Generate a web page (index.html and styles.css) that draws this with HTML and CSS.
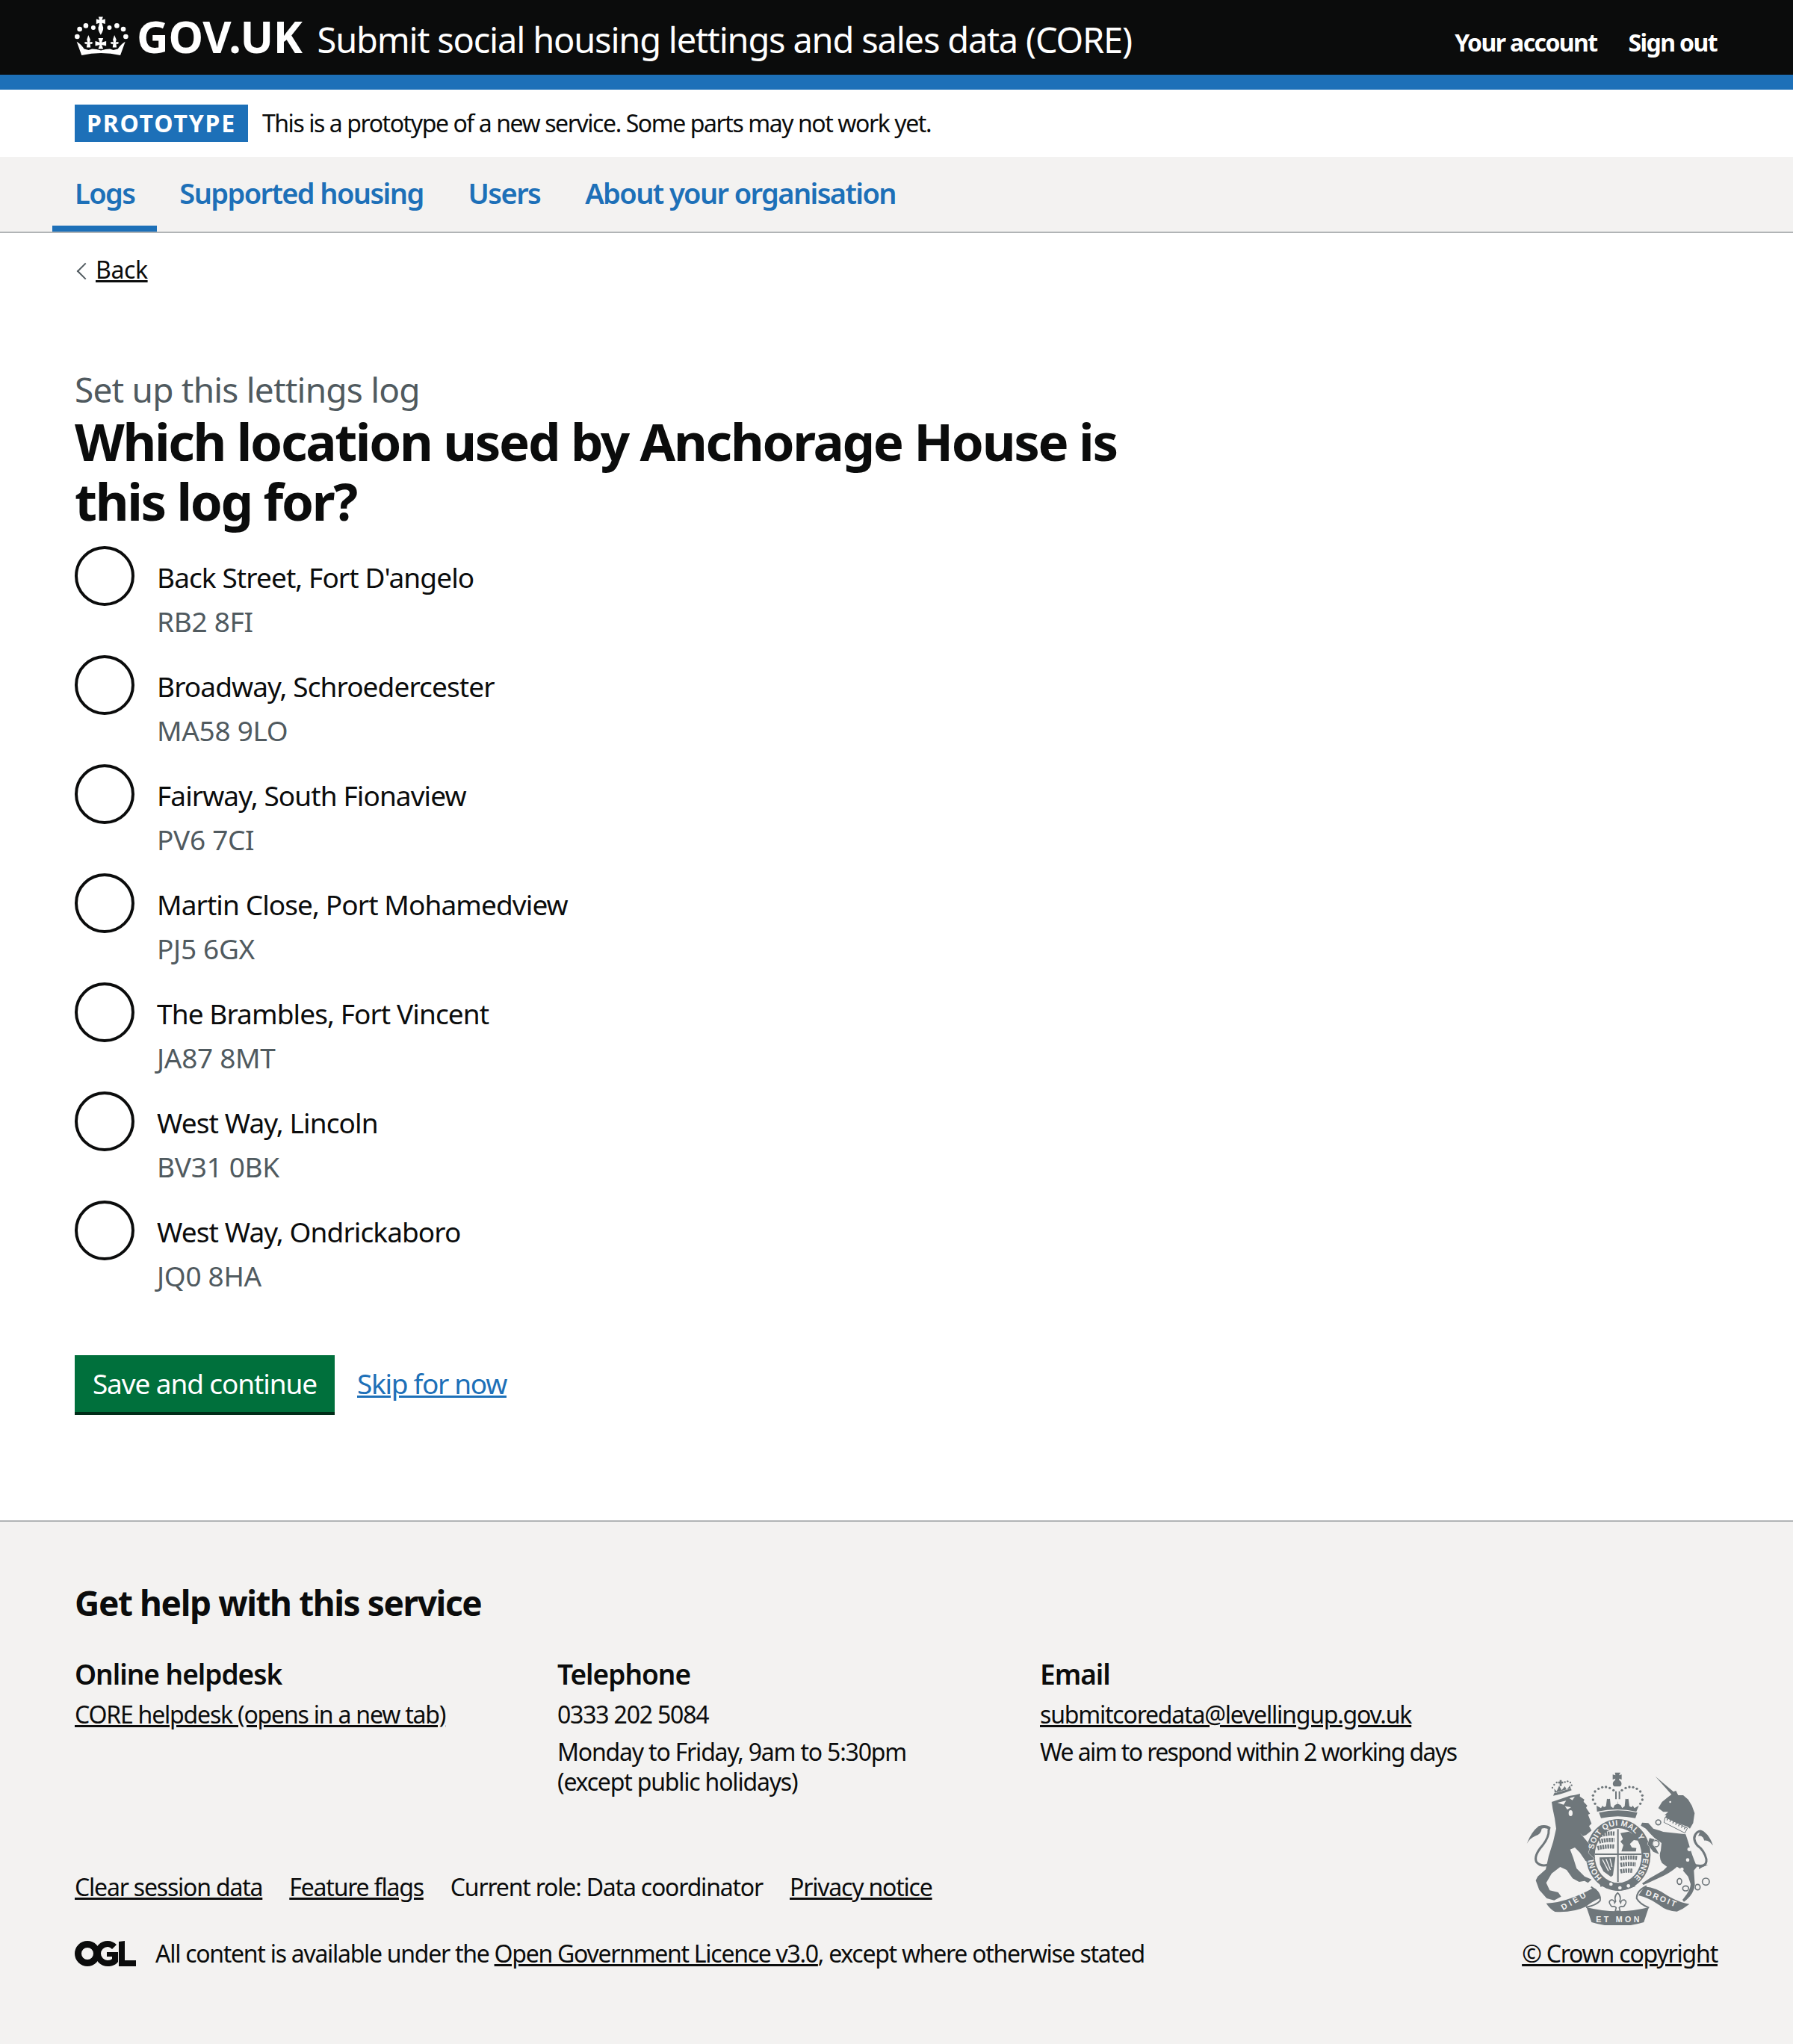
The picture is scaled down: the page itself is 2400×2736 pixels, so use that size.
FILE: index.html
```html
<!DOCTYPE html>
<html lang="en">
<head>
    <meta charset="UTF-8">
    <title>Submit social housing lettings and sales data (CORE)</title>
    <link rel="stylesheet" href="styles.css">
</head>
<body>
    <header class="header">
        <div class="header-inner">
            <a class="logo" href="#">
                <svg class="crown" viewBox="30 15 220 165" aria-hidden="true">
                    <g fill="#fff">
                        <path d="M126 22h18l-4 13 13-4v20l-13-4 3 12q7 12-8 36-15-24-8-36l3-12-13 4V31l13 4z"/>
                        <circle cx="105" cy="66" r="9"/><circle cx="75" cy="58" r="10"/><circle cx="50" cy="72" r="10"/><circle cx="40" cy="102" r="10"/>
                        <circle cx="170" cy="66" r="9"/><circle cx="200" cy="58" r="10"/><circle cx="226" cy="72" r="10"/><circle cx="236" cy="102" r="10"/>
                        <path d="M85 96l8 18-3 12q8-6 14 2l-8 5-4-3 2 16H78l2-16-4 3-8-5q6-8 14-2l-3-12z"/>
                        <path d="M190 96l8 18-3 12q8-6 14 2l-8 5-4-3 2 16h-16l2-16-4 3-8-5q6-8 14-2l-3-12z"/>
                        <path d="M125 108h20l-6 17 18-5v20l-18-5 6 17h-20l6-17-18 5v-20l18 5z"/>
                        <path d="M38 122q20 12 30 30l18 4 14-4 18 1 18 5 18-5 18-1 14 4 18-4q10-18 30-30l-20 55q-78-17-156 0z"/>
                    </g>
                </svg>
                <span class="logo-text">GOV.UK</span>
            </a>
            <a class="service-name" href="#">Submit social housing lettings and sales data (CORE)</a>
            <nav class="account">
                <a href="#">Your account</a>
                <a href="#">Sign out</a>
            </nav>
        </div>
    </header>

    <div class="phase">
        <strong class="phase-tag">PROTOTYPE</strong>
        <span>This is a prototype of a new service. Some parts may not work yet.</span>
    </div>

    <nav class="primary-nav">
        <a class="current" href="#">Logs</a>
        <a href="#">Supported housing</a>
        <a href="#">Users</a>
        <a href="#">About your organisation</a>
    </nav>

    <main class="page">
        <a class="back" href="#">Back</a>
        <p class="caption">Set up this lettings log</p>
        <h1>Which location used by Anchorage House is<br>this log for?</h1>

        <div class="radios">
            <label class="radio"><span class="circle"></span><span class="radio-text">Back Street, Fort D'angelo<small>RB2 8FI</small></span></label>
            <label class="radio"><span class="circle"></span><span class="radio-text">Broadway, Schroedercester<small>MA58 9LO</small></span></label>
            <label class="radio"><span class="circle"></span><span class="radio-text">Fairway, South Fionaview<small>PV6 7CI</small></span></label>
            <label class="radio"><span class="circle"></span><span class="radio-text">Martin Close, Port Mohamedview<small>PJ5 6GX</small></span></label>
            <label class="radio"><span class="circle"></span><span class="radio-text">The Brambles, Fort Vincent<small>JA87 8MT</small></span></label>
            <label class="radio"><span class="circle"></span><span class="radio-text">West Way, Lincoln<small>BV31 0BK</small></span></label>
            <label class="radio"><span class="circle"></span><span class="radio-text">West Way, Ondrickaboro<small>JQ0 8HA</small></span></label>
        </div>

        <div class="actions">
            <button class="save">Save and continue</button>
            <a class="skip" href="#">Skip for now</a>
        </div>
    </main>

    <footer class="footer">
        <h2>Get help with this service</h2>
        <div class="help">
            <div class="help-col">
                <h3>Online helpdesk</h3>
                <p><a href="#">CORE helpdesk (opens in a new tab)</a></p>
            </div>
            <div class="help-col">
                <h3>Telephone</h3>
                <p>0333 202 5084</p>
                <p>Monday to Friday, 9am to 5:30pm<br>(except public holidays)</p>
            </div>
            <div class="help-col">
                <h3>Email</h3>
                <p><a href="#">submitcoredata@levellingup.gov.uk</a></p>
                <p class="respond">We aim to respond within 2 working days</p>
            </div>
        </div>
        <div class="footer-bottom">
            <div class="meta">
                <ul class="meta-links">
                    <li><a href="#">Clear session data</a></li>
                    <li><a href="#">Feature flags</a></li>
                    <li>Current role: Data coordinator</li>
                    <li><a href="#">Privacy notice</a></li>
                </ul>
                <div class="licence">
                    <svg class="ogl" viewBox="0 0 82 34" aria-hidden="true">
                        <g fill="#0b0c0c">
                            <path fill-rule="evenodd" d="M17 0a17 17 0 1 0 0 34a17 17 0 1 0 0-34zM17 9a8 8 0 1 1 0 16a8 8 0 1 1 0-16z"/>
                            <path fill-rule="evenodd" d="M44 0c5 0 9 2 12 5l-6 6c-2-2-4-3-6-3a9 9 0 0 0 0 18c3 0 5-1 6-2v-3h-7v-6h15v13c-3 4-8 6-14 6a17 17 0 1 1 0-34z"/>
                            <path d="M59 1l8-1v26h15v8H59z"/>
                        </g>
                    </svg>
                    <span>All content is available under the <a href="#">Open Government Licence v3.0</a>, except where otherwise stated</span>
                </div>
            </div>
            <div class="copyright">
                <svg class="arms" viewBox="430 155 750 615" aria-hidden="true">
                    <defs>
                        <path id="ringTop" d="M699 488A100 118 0 0 1 899 488"/>
                        <path id="ringRight" d="M899 470A100 118 0 0 1 840 595"/>
                        <path id="ringLeft" d="M750 592A100 118 0 0 1 699 500"/>
                    </defs>
                    <g fill="#6f777b">
                        <!-- big crown -->
                        <path d="M786 157h22l-6 11 11-3v20l-11-4 2 8a14 14 0 0 1 3 24h-24a14 14 0 0 1 3-24l2-8-11 4v-20l11 3z"/>
                        <path d="M787 232h6v32h-6zM801 232h6v32h-6z"/>
                        <circle cx="780" cy="228" r="5"/><circle cx="765" cy="219" r="5"/><circle cx="750" cy="215" r="5"/><circle cx="735" cy="216" r="5"/><circle cx="720" cy="222" r="5"/><circle cx="706" cy="233" r="5"/><circle cx="698" cy="249" r="5"/><circle cx="698" cy="266" r="5"/><circle cx="706" cy="282" r="5"/>
                        <circle cx="814" cy="228" r="5"/><circle cx="829" cy="219" r="5"/><circle cx="844" cy="215" r="5"/><circle cx="859" cy="216" r="5"/><circle cx="874" cy="222" r="5"/><circle cx="888" cy="233" r="5"/><circle cx="896" cy="249" r="5"/><circle cx="896" cy="266" r="5"/><circle cx="888" cy="282" r="5"/>
                        <path d="M712 290l18 10 6-10 6 6 8-4 4-30 6 2 6-2 3 30 10 8 6-12 12-6-1-8h2l-1 8 12 6 6 12 10-8 3-30 6 2 6-2 4 30 8 4 6-6 6 10 18-10-10 24q-76-18-158 0z"/>
                        <path d="M722 318q75-18 154 0l-8 22q-71-15-138 0z"/>
                        <!-- garter -->
                        <ellipse cx="799" cy="488" rx="130" ry="144"/>
                        <path d="M722 588l14-8 4 10 32 14 30 8 30-2 28-12 8 16-32 12-34 6-30-6-30-14-14 4z"/>
                        <!-- scroll -->
                        <g transform="translate(420 150)">
                            <path d="M90 532Q170 530 280 470 300 478 310 510 275 525 250 545 200 570 125 566 105 555 90 532z"/>
                            <path d="M270 466Q312 490 306 522 290 540 250 548" fill="none" stroke="#6f777b" stroke-width="6"/>
                        </g>
                        <path d="M672 698q125 32 250 0l-20 60q-105 32-210 0z"/>
                        <g transform="translate(795 150)">
                            <path d="M110 465Q160 470 200 500 250 530 290 535 265 555 240 565 200 565 170 540 130 510 85 500z"/>
                            <path d="M118 462Q78 480 78 512 90 535 128 550" fill="none" stroke="#6f777b" stroke-width="6"/>
                        </g>
                        <!-- chain rings -->
                        <g fill="none" stroke="#6f777b" stroke-width="5">
                            <circle cx="960" cy="357" r="10"/><circle cx="950" cy="442" r="13"/>
                            <ellipse cx="1045" cy="594" rx="9" ry="12"/><ellipse cx="1070" cy="622" rx="12" ry="10"/><ellipse cx="1118" cy="617" rx="10" ry="11"/><circle cx="1151" cy="595" r="14"/>
                        </g>
                    </g>
                    <!-- fleur under the shield -->
                    <path d="M797 640q16 14 8 34l4 6q2-12 14-12 14 6 2 22-4 8-14 4-6 2-8 6l4 14h-20l4-14q-2-4-8-6-10 4-14-4-12-16 2-22 12 0 14 12l4-6q-8-20 8-34z" fill="#f3f2f1" stroke="#6f777b" stroke-width="5"/>
                    <!-- shield -->
                    <ellipse cx="799" cy="490" rx="94" ry="110" fill="#f3f2f1"/>
                    <g fill="#6f777b">
                        <rect x="795" y="384" width="6" height="212"/>
                        <rect x="706" y="482" width="186" height="6"/>
                        <path d="M808 400l34-6 30 18 6 18-16-2-16 16 8 14 18 2-2 14-58 0 8-26-12-14 10-10z"/>
                    </g>
                    <g fill="none" stroke="#6f777b" stroke-width="17" stroke-dasharray="7 3">
                        <path d="M728 408q30-8 56-6M722 434q30-8 62-6M716 460q34-8 68-6"/>
                        <path d="M808 502q30-6 68-2M808 528q30-6 62-2M808 554q26-6 50-2"/>
                    </g>
                    <path d="M724 498l64-2-10 74-8 6-30-22-14-28z" fill="#6f777b"/>
                    <path d="M736 506l24 46M750 504l18 44M766 502l8 34" fill="none" stroke="#f3f2f1" stroke-width="4"/>
                    <g fill="#f3f2f1">
                        <circle cx="770" cy="605" r="7"/><circle cx="806" cy="620" r="7"/><circle cx="840" cy="612" r="7"/>
                    </g>
                    <!-- lion -->
                    <g class="beast" transform="translate(420 150)">
                        <path d="M112 125L150 112 185 100 205 97 226 92 225 103 243 115 240 124 255 140 250 148 266 172 258 176 272 212 262 222 272 240 250 258 238 262 226 250 268 300 258 330 282 352 268 372 248 362 225 328 205 308 186 316 198 348 212 392 244 424 272 436 258 450 244 442 222 446 196 432 172 398 146 386 112 412 90 450 104 480 138 488 150 505 122 520 92 512 62 478 48 440 56 424 88 396 100 342 118 285 130 232 124 190 116 152z"/>
                        <path d="M118 100Q150 95 192 78L188 68 122 90z"/>
                        <path d="M124 88L122 72 132 82 142 60 152 78 165 62 172 76 186 58 188 70z"/>
                        <path d="M144 37h8v6h6v8h-6v10h-8v-10h-6v-8h6z"/>
                        <path d="M12 293Q30 245 60 222 90 212 108 228L104 240Q90 225 72 232 70 255 45 262 25 270 12 293z"/>
                    </g>
                    <g fill="#6f777b" transform="translate(420 150)">
                        <circle cx="115" cy="68" r="3.5"/><circle cx="122" cy="56" r="3.5"/><circle cx="132" cy="47" r="3.5"/><circle cx="165" cy="45" r="3.5"/><circle cx="176" cy="42" r="3.5"/><circle cx="187" cy="47" r="3.5"/><circle cx="192" cy="58" r="3.5"/>
                        <path d="M100 235Q103 265 75 300 40 340 50 365 65 385 95 378" fill="none" stroke="#6f777b" stroke-width="9"/>
                    </g>
                    <g fill="#f3f2f1" transform="translate(420 150)">
                        <path d="M135 128L170 120 160 136zM183 110L205 104 195 118zM165 142L190 146 175 156z"/>
                        <ellipse cx="188" cy="170" rx="8" ry="12"/>
                    </g>
                    <!-- unicorn -->
                    <g class="beast" transform="translate(795 150)">
                        <path d="M153 22L226 84 236 80 245 98 265 98 285 115 300 140 311 170 305 210 292 232 283 225 190 190 198 178 190 178 205 165 185 165 165 150 180 125 205 105 218 95z"/>
                        <path d="M185 245L275 255 285 285Q300 340 320 385L308 400 312 460Q305 500 268 526L262 518Q295 480 295 455L285 425 262 398 240 385Q225 400 190 420L125 450 105 458 100 452 130 432 185 400 200 385 180 370Q165 345 175 320L178 290 165 280 150 270 135 255 115 232 95 220 100 208 125 210 145 232 170 240z"/>
                        <path d="M150 275L130 270 122 295 145 325 168 335 155 310 140 295z"/>
                        <path d="M335 240Q365 245 385 300 370 278 350 280L345 268Q335 258 325 262zM330 378L365 378 345 385 328 395z"/>
                    </g>
                    <g transform="translate(795 150)">
                        <path d="M300 375Q362 395 358 355 350 320 322 300 298 270 320 248 338 235 350 252" fill="none" stroke="#6f777b" stroke-width="9"/>
                        <path d="M193 186L282 230 272 250 188 207z" fill="#f3f2f1" stroke="#6f777b" stroke-width="3"/>
                        <path d="M200 194L274 232" fill="none" stroke="#6f777b" stroke-width="9" stroke-dasharray="4 9"/>
                        <circle cx="290" cy="315" r="8" fill="#f3f2f1"/><circle cx="283" cy="358" r="7" fill="#f3f2f1"/><circle cx="260" cy="395" r="7" fill="#f3f2f1"/>
                        <circle cx="213" cy="125" r="4" fill="#f3f2f1"/>
                    </g>
                    <g class="arms-text" fill="#f3f2f1">
                        <text><textPath href="#ringTop" startOffset="22">SOIT QUI MAL Y</textPath></text>
                        <text><textPath href="#ringRight" startOffset="8">PENSE</textPath></text>
                        <text><textPath href="#ringLeft" startOffset="20">HONI</textPath></text>
                        <text transform="translate(578 710) rotate(-30)" textLength="110">DIEU</text>
                        <text transform="translate(907 648) rotate(22)" textLength="130">DROIT</text>
                        <text x="710" y="757" textLength="175">ET MON</text>
                    </g>
                </svg>
                <a href="#">© Crown copyright</a>
            </div>
        </div>
    </footer>
</body>
</html>
```

FILE: styles.css
```css
* {
    box-sizing: border-box;
}
body {
    margin: 0;
    font-family: "Noto Sans", Arial, sans-serif;
    font-size: 32px;
    line-height: 40px;
    color: #0b0c0c;
    background: #fff;
}
a {
    color: inherit;
}
p, h1, h2, h3, ul {
    margin: 0;
    padding: 0;
}

.header {
    background: #0b0c0c;
    border-bottom: 20px solid #1d70b8;
    height: 120px;
}
.header-inner {
    height: 100px;
    padding: 0 102px 0 100px;
    display: flex;
    align-items: flex-start;
    color: #fff;
}
.header-inner a {
    color: #fff;
    text-decoration: none;
}
.logo {
    display: flex;
    align-items: flex-start;
    gap: 10px;
    margin-right: 20px;
}
.crown {
    width: 73px;
    height: 55px;
    margin-top: 20px;
}
.logo-text {
    margin-top: 18px;
    font-size: 59px;
    font-weight: 700;
    line-height: 60px;
    letter-spacing: -0.3px;
}
.service-name {
    margin-top: 23px;
    font-size: 47px;
    line-height: 60px;
    letter-spacing: -1.2px;
}
.account {
    margin-left: auto;
    margin-top: 37px;
    display: flex;
    gap: 42px;
    font-size: 32px;
    font-weight: 700;
    letter-spacing: -1.6px;
}

.phase {
    height: 90px;
    padding: 20px 100px;
    display: flex;
    align-items: center;
    gap: 19px;
    letter-spacing: -1.43px;
}
.phase-tag {
    background: #1d70b8;
    color: #fff;
    height: 50px;
    padding: 0 16px;
    font-size: 32px;
    line-height: 50px;
    font-weight: 700;
    letter-spacing: 1.8px;
}

.primary-nav {
    height: 102px;
    background: #f3f2f1;
    border-bottom: 2px solid #b1b4b6;
    padding: 0 70px;
    display: flex;
}
.primary-nav a {
    display: block;
    height: 100px;
    padding: 28px 30px 0;
    font-size: 38px;
    line-height: 40px;
    font-weight: 600;
    letter-spacing: -1.6px;
    color: #1d70b8;
    text-decoration: none;
}
.primary-nav a.current {
    border-bottom: 8px solid #1d70b8;
}

.page {
    padding: 29px 100px 0;
}
.back {
    display: block;
    width: max-content;
    line-height: 40px;
    padding-left: 28px;
    position: relative;
    letter-spacing: -0.4px;
}
.back::before {
    content: "";
    position: absolute;
    left: 6px;
    top: 14px;
    width: 14px;
    height: 14px;
    border-left: 2px solid #505a5f;
    border-bottom: 2px solid #505a5f;
    transform: rotate(45deg);
}
.caption {
    margin-top: 115px;
    font-size: 46px;
    line-height: 50px;
    color: #505a5f;
    letter-spacing: -0.8px;
}
h1 {
    margin-top: 4px;
    font-size: 69px;
    line-height: 80px;
    font-weight: 700;
    letter-spacing: -2.3px;
}
.radios {
    margin-top: 21px;
}
.radio {
    display: flex;
    height: 146px;
}
.circle {
    flex: none;
    width: 80px;
    height: 80px;
    border: 4px solid #0b0c0c;
    border-radius: 50%;
    background: #fff;
}
.radio-text {
    margin-left: 30px;
    padding-top: 22px;
    font-size: 37px;
    line-height: 40px;
    letter-spacing: -0.9px;
}
.radio-text small {
    display: block;
    margin-top: 19px;
    font-size: 37px;
    color: #505a5f;
    letter-spacing: -0.3px;
}

.actions {
    margin-top: 61px;
    display: flex;
    align-items: flex-start;
    gap: 30px;
}
.save {
    height: 80px;
    width: 348px;
    border: 0;
    border-bottom: 4px solid #002d18;
    background: #00703c;
    color: #fff;
    font: inherit;
    font-size: 37px;
    letter-spacing: -1.1px;
}
.skip {
    font-size: 37px;
    line-height: 76px;
    color: #1d70b8;
    letter-spacing: -1.3px;
}

.footer {
    margin-top: 141px;
    height: 701px;
    background: #f3f2f1;
    border-top: 2px solid #b1b4b6;
    padding: 83px 101px 0 100px;
    letter-spacing: -1.2px;
}
.footer h2 {
    font-size: 46px;
    line-height: 50px;
    font-weight: 700;
    letter-spacing: -1.4px;
}
.help {
    margin-top: 51px;
    display: grid;
    grid-template-columns: 646px 646px 1fr;
}
.help-col h3 {
    font-size: 37px;
    line-height: 40px;
    font-weight: 600;
    letter-spacing: -1px;
    margin-bottom: 14px;
}
.help-col p {
    margin-bottom: 10px;
}
.help-col .respond {
    letter-spacing: -1.6px;
}
.footer-bottom {
    display: flex;
    justify-content: space-between;
    align-items: flex-end;
    margin-top: -43px;
}
.meta-links {
    list-style: none;
    display: flex;
    gap: 36px;
}
.licence {
    margin-top: 49px;
    display: flex;
    align-items: center;
    gap: 26px;
    letter-spacing: -1.28px;
}
.ogl {
    width: 82px;
    height: 34px;
}
.copyright {
    display: flex;
    flex-direction: column;
    align-items: center;
    gap: 18px;
}
.arms {
    width: 250px;
    height: 205px;
}
.beast {
    fill: #6f777b;
    stroke: #f3f2f1;
    stroke-width: 3px;
    paint-order: stroke;
}
.arms-text {
    font-family: "Liberation Sans", sans-serif;
    font-size: 32px;
    font-weight: 700;
    letter-spacing: 1px;
}
```
